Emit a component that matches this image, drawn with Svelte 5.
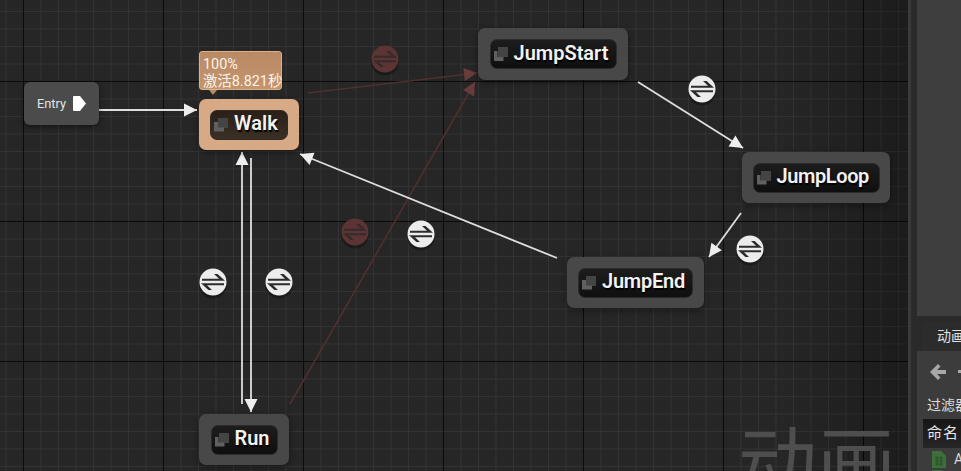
<script>
  const nodes = [
    { name: 'JumpStart', x: 478, y: 28, w: 150, h: 52, tw: 127, ls: 0 },
    { name: 'JumpLoop', x: 742, y: 152, w: 148, h: 51, tw: 127, ls: -0.4 },
    { name: 'JumpEnd', x: 567, y: 257, w: 137, h: 51, tw: 115, ls: -0.25 },
    { name: 'Run', x: 199, y: 414, w: 90, h: 51, tw: 67, ls: 0 }
  ];
  const white = [
    [99, 110, 197, 110],
    [242, 404, 242, 152],
    [251, 158, 251, 412],
    [638, 82, 743, 148],
    [741, 213, 709, 257],
    [557, 258, 300, 154]
  ];
  const red = [
    [308, 93, 477, 73],
    [290, 404, 475, 82]
  ];
  function arrow(l) {
    const [x1, y1, x2, y2] = l;
    const a = Math.atan2(y2 - y1, x2 - x1);
    const len = 13, wd = 6.5;
    const bx = x2 - Math.cos(a) * len, by = y2 - Math.sin(a) * len;
    const nx = -Math.sin(a) * wd, ny = Math.cos(a) * wd;
    return `${x2},${y2} ${bx + nx},${by + ny} ${bx - nx},${by - ny}`;
  }
  const icons = [
    { x: 213, y: 282 }, { x: 279, y: 282 }, { x: 421, y: 234 },
    { x: 702, y: 89 }, { x: 750, y: 249 }
  ];
  const redIcons = [{ x: 385, y: 59 }, { x: 355, y: 232 }];
  const glyphPath = 'M-11 -3.2H6L1 -8H4.6L12 -1.2H-11Z M11 3.2H-6L-1 8H-4.6L-12 1.2H11Z';
</script>

<div class="screen">
  <main class="canvas">
    <div class="grid"></div>
    <div class="vignette"></div>
    <div class="watermark">动画</div>

    <svg class="wires" width="908" height="471" viewBox="0 0 908 471">
      {#each red as l}
        <line x1={l[0]} y1={l[1]} x2={l[2]} y2={l[3]} class="wire-red" />
        <polygon points={arrow(l)} class="head-red" />
      {/each}
      {#each white as l}
        <line x1={l[0]} y1={l[1]} x2={l[2]} y2={l[3]} class="wire" />
        <polygon points={arrow(l)} class="head" />
      {/each}
      {#each redIcons as i}
        <g transform="translate({i.x} {i.y})">
          <circle r="14" cy="2.5" class="icon-shadow" />
          <circle r="13.5" class="disc-red" />
          <path d={glyphPath} class="glyph-red" />
        </g>
      {/each}
      {#each icons as i}
        <g transform="translate({i.x} {i.y})">
          <circle r="14" cy="2.5" class="icon-shadow" />
          <circle r="13.5" class="disc" />
          <path d={glyphPath} class="glyph" />
        </g>
      {/each}
    </svg>

    <div class="entry">
      <span>Entry</span>
      <svg width="13" height="15" viewBox="0 0 13 15"><path d="M1 0H7L13 7.5L7 15H1Q0 15 0 14V1Q0 0 1 0Z" fill="#fff" /></svg>
    </div>

    <div class="tip">
      <div>100%</div>
      <div>激活8.821秒</div>
    </div>

    <div class="node active walk">
      <div class="title">
        <i class="state"></i><span>Walk</span>
      </div>
    </div>

    {#each nodes as n}
      <div class="node" style="left:{n.x}px;top:{n.y}px;width:{n.w}px;height:{n.h}px">
        <div class="title" style="width:{n.tw}px;letter-spacing:{n.ls}px">
          <i class="state"></i><span>{n.name}</span>
        </div>
      </div>
    {/each}
  </main>

  <div class="splitter"></div>

  <aside class="side">
    <div class="upper"></div>
    <div class="tabs"><div class="tab">动画</div></div>
    <div class="panel">
      <div class="toolbar">
        <svg class="fixed" width="16" height="16" viewBox="0 0 16 16"><path d="M8 0L0 8L8 16L10.5 13.5L7 10H16V6H7L10.5 2.5Z" fill="#a8a8a8" /></svg>
        <span class="fwd"></span>
      </div>
      <div class="filter">过滤器</div>
      <div class="header">命名</div>
      <div class="row">
        <svg class="fixed" width="14" height="17" viewBox="0 0 14 17"><path d="M0 0H9L14 5V17H0Z" fill="#3d6f3b" /><path d="M3 7H11M3 10H11M3 13H11M5 5V15M9 5V15" stroke="#27502a" fill="none" /></svg>
        <span>A</span>
      </div>
      <div class="row next">
        <svg class="fixed" width="14" height="17" viewBox="0 0 14 17"><path d="M0 0H9L14 5V17H0Z" fill="#3d6f3b" /></svg>
      </div>
    </div>
  </aside>
</div>

<style>
  :global(body) { margin: 0; background: #262626; overflow: hidden; }
  .screen {
    display: flex; width: 961px; height: 471px; overflow: hidden;
    font-family: Roboto, "Noto Sans CJK SC", sans-serif;
  }
  .canvas {
    position: relative; width: 908px; height: 471px; flex: none;
    background: #262626; overflow: hidden;
  }
  .grid {
    position: absolute; inset: 0;
    background:
      linear-gradient(90deg, transparent 23px, #0a0a0a 23px 24px, transparent 24px) 0 0 / 140px 100%,
      linear-gradient(180deg, transparent 81px, #0a0a0a 81px 82px, transparent 82px) 0 0 / 100% 140px,
      linear-gradient(90deg, #333 1px, transparent 1px) 5.5px 0 / 17.5px 100%,
      linear-gradient(180deg, #333 1px, transparent 1px) 0 11px / 100% 17.5px,
      #262626;
  }
  .vignette {
    position: absolute; inset: 0;
    background: linear-gradient(90deg, transparent 780px, rgba(0,0,0,.28) 908px);
  }
  .watermark {
    position: absolute; left: 738px; top: 413px;
    font: 79px/92px "Noto Sans CJK SC", sans-serif;
    color: #4e4e4e;
    white-space: nowrap;
  }
  .wires { position: absolute; left: 0; top: 0; }
  .wire { stroke: #dedede; stroke-width: 1.8; }
  .head { fill: #eeeeee; }
  .wire-red { stroke: #4e3030; stroke-width: 1.6; }
  .head-red { fill: #683c3b; }
  .icon-shadow { fill: rgba(0,0,0,.3); }
  .disc { fill: #ececec; }
  .glyph { fill: #2c2c2c; }
  .disc-red { fill: #5b3433; }
  .glyph-red { fill: #352b2b; }
  .entry {
    position: absolute; left: 24px; top: 82px; width: 75px; height: 43px;
    box-sizing: border-box; padding: 0 13px;
    display: flex; align-items: center; gap: 7px;
    background: #4b4b4b; border-radius: 6px;
    box-shadow: 0 2px 5px rgba(0,0,0,.45);
    color: #e4e4e4; font-size: 12.8px;
  }
  .tip {
    position: absolute; left: 199px; top: 51px; width: 83px; height: 39px;
    box-sizing: border-box; padding: 4px 3px;
    background: linear-gradient(#b98a63, #c4946d);
    border: 1px solid #dcb08a; border-radius: 3px;
    color: #fbf3ea; font-size: 14.4px; line-height: 17px; white-space: nowrap;
  }
  .tip::after {
    content: ""; position: absolute; left: 9px; bottom: -6px;
    border: 4px solid transparent; border-bottom: 0; border-top-width: 5px;
    border-top-color: #b58a66; width: 0; height: 0;
  }
  .node {
    position: absolute; box-sizing: border-box;
    display: flex; align-items: center; justify-content: center;
    background: #484848; border-radius: 7px;
    box-shadow: 0 2px 6px rgba(0,0,0,.45);
  }
  .walk { left: 199px; top: 99px; width: 100px; height: 51px; }
  .active { background: #d7a985; }
  .title {
    box-sizing: border-box; height: 30px; width: 78px; padding-left: 3px;
    display: flex; align-items: center; gap: 6px;
    background: linear-gradient(#1d1d1d, #0f0f0f);
    border: 1px solid #2c2c2c; border-radius: 7px;
    color: #f2f2f2; font-size: 20px; font-weight: 600;
    text-shadow: 1px 2px 1px #000; white-space: nowrap;
  }
  .title span { margin-top: -3px; }
  .active .title { background: linear-gradient(#2a2018, #3b3026); }
  .state {
    position: relative; display: block; width: 14px; height: 14px; flex: none;
  }
  .state::before {
    content: ""; position: absolute; left: 4px; top: 0; width: 10px; height: 10px; background: #444;
  }
  .state::after {
    content: ""; position: absolute; left: 0; top: 4px; width: 10px; height: 10px;
    background: #606060; clip-path: polygon(0 0, 40% 0, 40% 60%, 100% 60%, 100% 100%, 0 100%);
  }
  .splitter {
    width: 9px; flex: none; box-sizing: border-box;
    background: #2a2a2a; border-left: 3px solid #3a3a3a;
  }
  .side {
    flex: 1; min-width: 0; display: flex; flex-direction: column;
    background: #2a2a2a; overflow: hidden;
  }
  .upper { height: 316px; flex: none; background: #3e3e3e; }
  .tabs { height: 35px; flex: none; padding: 6px 0 0 5px; box-sizing: border-box; }
  .tab {
    height: 29px; background: #2c2c2c; padding: 2px 0 0 15px; box-sizing: border-box;
    color: #e0e0e0; font-size: 14px; line-height: 24px; white-space: nowrap;
    border-radius: 3px 0 0 0;
  }
  .panel { flex: 1; background: #3c3c3c; overflow: hidden; }
  .fixed { flex: none; }
  .toolbar { height: 38px; display: flex; align-items: center; gap: 12px; padding: 3px 0 0 13px; box-sizing: border-box; }
  .fwd { width: 8px; height: 3px; background: #a8a8a8; flex: none; }
  .filter { color: #dcdcdc; font-size: 14px; line-height: 20px; padding: 6px 0 0 10px; height: 30px; box-sizing: border-box; white-space: nowrap; }
  .header {
    margin-left: 6px; height: 29px; box-sizing: border-box; padding: 0 4px;
    background: linear-gradient(#161616, #262626);
    color: #e6e6e6; font-size: 15px; line-height: 28px; letter-spacing: 1px;
    white-space: nowrap;
  }
  .row { display: flex; align-items: center; gap: 8px; padding: 2px 0 0 15px; height: 20px; box-sizing: border-box; color: #d8d8d8; font-size: 14px; }
  .row.next { padding-top: 0; }
</style>
